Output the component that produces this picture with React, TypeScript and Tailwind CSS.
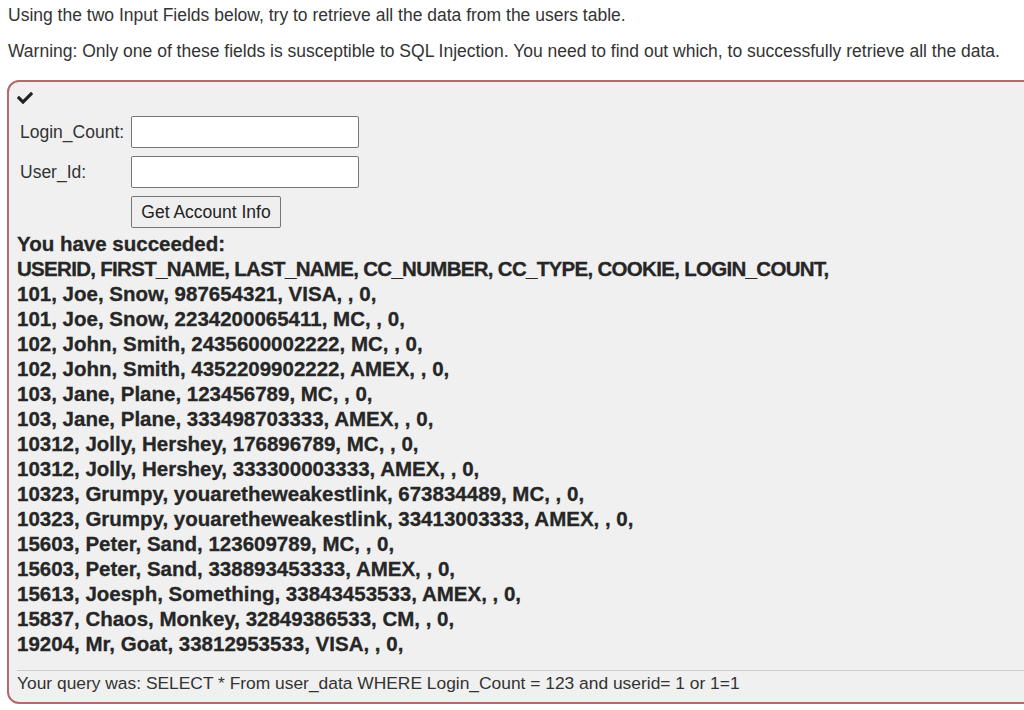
import React from "react";

const rows = [
  "101, Joe, Snow, 987654321, VISA, , 0,",
  "101, Joe, Snow, 2234200065411, MC, , 0,",
  "102, John, Smith, 2435600002222, MC, , 0,",
  "102, John, Smith, 4352209902222, AMEX, , 0,",
  "103, Jane, Plane, 123456789, MC, , 0,",
  "103, Jane, Plane, 333498703333, AMEX, , 0,",
  "10312, Jolly, Hershey, 176896789, MC, , 0,",
  "10312, Jolly, Hershey, 333300003333, AMEX, , 0,",
  "10323, Grumpy, youaretheweakestlink, 673834489, MC, , 0,",
  "10323, Grumpy, youaretheweakestlink, 33413003333, AMEX, , 0,",
  "15603, Peter, Sand, 123609789, MC, , 0,",
  "15603, Peter, Sand, 338893453333, AMEX, , 0,",
  "15613, Joesph, Something, 33843453533, AMEX, , 0,",
  "15837, Chaos, Monkey, 32849386533, CM, , 0,",
  "19204, Mr, Goat, 33812953533, VISA, , 0,",
];

export default function App() {
  return (
    <div
      className="w-[1024px] h-[710px] overflow-hidden bg-white text-[#333]"
      style={{ fontFamily: '"Liberation Sans", Arial, sans-serif' }}
    >
      <div className="pl-[8px]">
        <p className="pt-[5px] text-[17.5px] leading-[20px]">
          Using the two Input Fields below, try to retrieve all the data from the users table.
        </p>
        <p className="mt-[16px] text-[17.5px] leading-[20px]">
          Warning: Only one of these fields is susceptible to SQL Injection. You need to find out which, to successfully retrieve all the data.
        </p>
      </div>
      <div className="mt-[19px] ml-[7px] w-[1060px] border-2 border-[#b36a6a] rounded-[12px] bg-[#f0f0f0] pl-[8px] pt-[8px] pb-[8px]">
        <svg width="16" height="16" viewBox="0 0 512 512" className="block">
          <path
            fill="#222"
            d="M173.898 439.404l-166.4-166.4c-9.997-9.997-9.997-26.206 0-36.204l36.203-36.204c9.997-9.998 26.207-9.998 36.204 0L192 312.69 432.095 72.596c9.997-9.997 26.207-9.997 36.204 0l36.203 36.204c9.997 9.997 9.997 26.206 0 36.204l-294.4 294.401c-9.998 9.997-26.207 9.997-36.204-.001z"
          />
        </svg>
        <div className="mt-[10px] flex flex-col gap-[8px] text-[17.5px]">
          <div className="flex items-center">
            <label className="w-[114px] pl-[3px]">Login_Count:</label>
            <input className="w-[228px] h-[32px] border border-[#767676] rounded-[2px] bg-white" />
          </div>
          <div className="flex items-center">
            <label className="w-[114px] pl-[3px]">User_Id:</label>
            <input className="w-[228px] h-[32px] border border-[#767676] rounded-[2px] bg-white" />
          </div>
          <div className="flex">
            <button className="ml-[114px] w-[150px] h-[32px] border border-[#767676] rounded-[2px] bg-[#efefef] text-[17.5px] text-[#222]">
              Get Account Info
            </button>
          </div>
        </div>
        <div className="mt-[3px] text-[20.5px] leading-[25px] font-bold text-[#262626] [-webkit-text-stroke:0.3px_#262626]">
          <div>You have succeeded:</div>
          <div className="tracking-[-0.7px]">USERID, FIRST_NAME, LAST_NAME, CC_NUMBER, CC_TYPE, COOKIE, LOGIN_COUNT,</div>
          {rows.map((r, i) => (
            <div key={i}>{r}</div>
          ))}
        </div>
        <div className="mt-[14px] border-t border-[#cccccc] pt-[1px] text-[17.4px] leading-[22px]">
          Your query was: SELECT * From user_data WHERE Login_Count = 123 and userid= 1 or 1=1
        </div>
      </div>
    </div>
  );
}
